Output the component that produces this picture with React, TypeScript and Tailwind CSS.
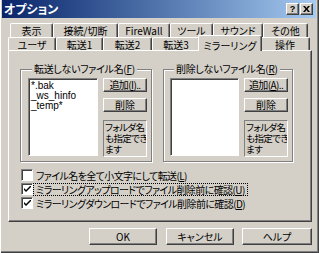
import React from "react"

const raised =
  "border border-t-white border-l-white border-r-[#404040] border-b-[#404040] shadow-[inset_-1px_-1px_0_#808080] bg-[#d4d0c8]"
const sunken =
  "border border-t-[#808080] border-l-[#808080] border-r-white border-b-white shadow-[inset_1px_1px_0_#404040]"

const row1 = [
  { label: "表示", w: "w-[43px]" },
  { label: "接続/切断", w: "w-[65px]" },
  { label: "FireWall", w: "w-[52px]" },
  { label: "ツール", w: "w-[43px]" },
  { label: "サウンド", w: "w-[50px]" },
  { label: "その他", w: "w-[45px]" },
]

const Tab = ({ label, w }: { label: string; w: string }) => (
  <div
    className={`${w} h-full flex items-center justify-center border-t border-l border-r border-t-white border-l-white border-r-[#404040] shadow-[inset_-1px_0_0_#808080] rounded-t-[2px]`}
  >
    {label}
  </div>
)

const Key = ({ k }: { k: string }) => (
  <span>
    (<span className="underline">{k}</span>)
  </span>
)

const CheckBox = ({ checked }: { checked: boolean }) => (
  <div className={`w-[12px] h-[12px] bg-white ${sunken} flex items-center justify-center shrink-0`}>
    {checked && (
      <svg width="7" height="7" viewBox="0 0 7 7">
        <path d="M0 2 L0 4 L2 6 L7 1 L7 -1 L2 4 Z" fill="#000" />
      </svg>
    )}
  </div>
)

const Group = ({
  title,
  k,
  items,
  addKey,
  width,
  pad,
  listW,
}: {
  title: string
  k: string
  items: string[]
  addKey: string
  width: string
  pad: string
  listW: string
}) => (
  <fieldset
    className={`${width} h-[100px] border border-[#808080] shadow-[1px_1px_0_white,inset_1px_1px_0_white] ${pad}`}
  >
    <legend className="ml-[4px] px-[2px] h-[14px] leading-[14px] bg-[#d4d0c8] tracking-[-0.3px]">
      {title}
      <Key k={k} />
    </legend>
    <div className="flex gap-[5px] mt-[2px]">
      <div
        className={`${listW} h-[78px] bg-white ${sunken} pl-[2px] pt-[2px] leading-[10px] font-['Liberation_Sans','Noto_Sans_CJK_JP',sans-serif] text-[10px]`}
      >
        {items.map((it) => (
          <div key={it}>{it}</div>
        ))}
      </div>
      <div className="flex flex-col w-[44px]">
        <div
          className={`${raised} h-[14px] flex items-center justify-center leading-none tracking-[-0.6px] whitespace-nowrap`}
        >
          追加<Key k={addKey} />..
        </div>
        <div className={`${raised} h-[14px] mt-[6px] flex items-center justify-center leading-none`}>
          削除
        </div>
        <div className="mt-[8px] h-[37px] border border-t-[#808080] border-l-[#808080] border-r-white border-b-white pl-[1px] text-[9.5px] leading-[11px] tracking-[-0.6px] whitespace-nowrap overflow-hidden pt-[1px]">
          フォルダ名
          <br />
          も指定でき
          <br />
          ます
        </div>
      </div>
    </div>
  </fieldset>
)

export default function App() {
  return (
    <div className="w-[319px] h-[253px] bg-[#d4d0c8] flex flex-col overflow-hidden text-black text-[10px] font-['Noto_Sans_CJK_JP',sans-serif] [font-feature-settings:'palt'] shadow-[inset_1px_0_0_white,inset_-1px_-1px_0_#404040,inset_-2px_-2px_0_#808080]">
      {/* title bar */}
      <div className="h-[18px] ml-[2px] mr-[3px] bg-linear-to-r from-[#0a246a] to-[#a6caf0] flex items-center pl-[2px] pr-[3px]">
        <span className="text-white text-[12px] font-bold leading-none">オプション</span>
        <div className="ml-auto flex items-center">
          <div
            className={`${raised} w-[13px] h-[12px] flex items-center justify-center text-[9px] font-bold leading-none font-['Liberation_Sans',sans-serif]`}
          >
            ?
          </div>
          <div className={`${raised} w-[13px] h-[12px] ml-[1px] flex items-center justify-center`}>
            <svg width="7" height="6" viewBox="0 0 7 6">
              <path d="M0 0 L2 0 L3.5 2 L5 0 L7 0 L4.5 3 L7 6 L5 6 L3.5 4 L2 6 L0 6 L2.5 3 Z" fill="#000" />
            </svg>
          </div>
        </div>
      </div>

      {/* tabs */}
      <div className="mt-[5px] h-[14px] pl-[10px] flex">
        {row1.map((t) => (
          <Tab key={t.label} {...t} />
        ))}
      </div>
      <div className="h-[13px] pl-[8px] flex">
        <Tab label="ユーザ" w="w-[48px]" />
        <Tab label="転送1" w="w-[47px]" />
        <Tab label="転送2" w="w-[49px]" />
        <Tab label="転送3" w="w-[48px]" />
        <div className="relative z-10 w-[64px] h-[16px] -mt-[2px] -mx-[2px] flex items-start pt-[2px] justify-center bg-[#d4d0c8] border-t border-l border-r border-t-white border-l-white border-r-[#404040] shadow-[inset_-1px_0_0_#808080] rounded-t-[2px]">
          ミラーリング
        </div>
        <Tab label="操作" w="w-[50px]" />
      </div>

      {/* panel */}
      <div className={`ml-[8px] w-[304px] h-[172px] ${raised} flex flex-col items-start pl-[11px] pt-[11px]`}>
        <div className="flex gap-[11px]">
          <Group
            title="転送しないファイル名"
            k="F"
            items={["*.bak", "_ws_hinfo", "_temp*"]}
            addKey="I"
            width="w-[132px]"
            pad="pl-[7px]"
            listW="w-[70px]"
          />
          <Group
            title="削除しないファイル名"
            k="R"
            items={[]}
            addKey="A"
            width="w-[130px]"
            pad="pl-[6px]"
            listW="w-[69px]"
          />
        </div>
        <div className="mt-[6px] ml-[1px] flex flex-col tracking-[-0.6px]">
          <div className="h-[14px] flex items-center gap-[3px]">
            <CheckBox checked={false} />
            <span>
              ファイル名を全て小文字にして転送<Key k="L" />
            </span>
          </div>
          <div className="h-[14px] flex items-center gap-[1px]">
            <CheckBox checked />
            <span className="outline-1 outline-dotted outline-black px-[2px] leading-[11px]">
              ミラーリングアップロードでファイル削除前に確認<Key k="U" />
            </span>
          </div>
          <div className="h-[14px] flex items-center gap-[3px]">
            <CheckBox checked />
            <span>
              ミラーリングダウンロードでファイル削除前に確認<Key k="D" />
            </span>
          </div>
        </div>
      </div>

      {/* buttons */}
      <div className="mt-[6px] flex pl-[89px] gap-[9px]">
        <div className={`${raised} w-[68px] h-[17px] flex items-center justify-center`}>OK</div>
        <div className={`${raised} w-[68px] h-[17px] flex items-center justify-center`}>キャンセル</div>
        <div className={`${raised} w-[70px] h-[17px] -ml-[1px] flex items-center justify-center`}>ヘルプ</div>
      </div>
    </div>
  )
}
